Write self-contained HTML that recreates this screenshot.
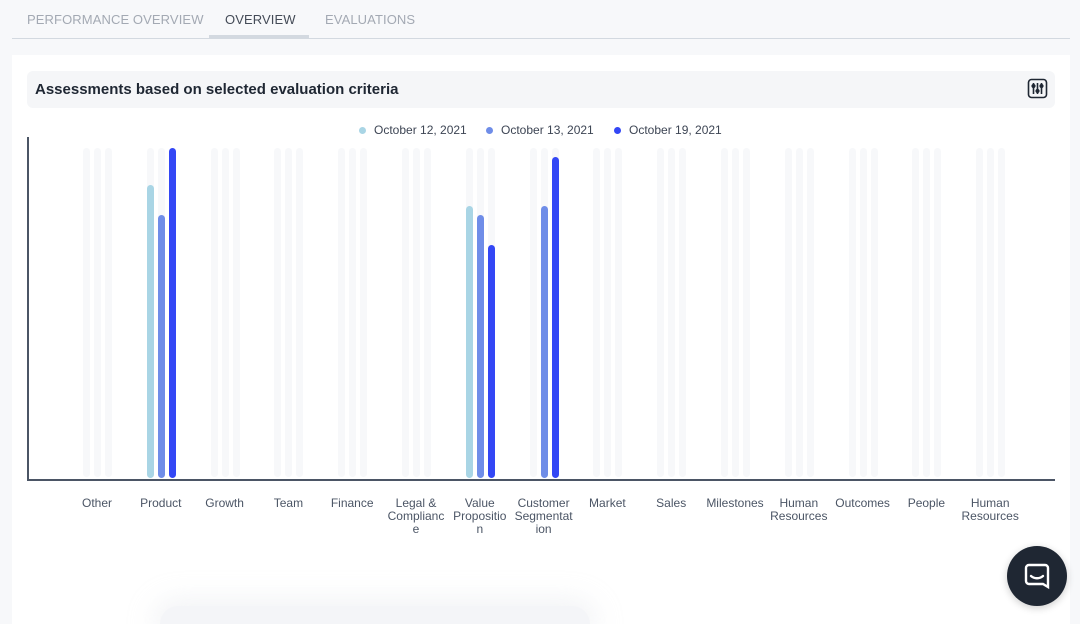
<!DOCTYPE html>
<html><head><meta charset="utf-8"><style>
*{margin:0;padding:0;box-sizing:border-box}
html,body{width:1080px;height:624px;overflow:hidden}
body{background:#f7f8fa;font-family:"Liberation Sans",sans-serif;position:relative}
.tabs{position:absolute;left:12px;top:0;width:1058px;height:39px;border-bottom:1px solid #d3d9e0}
.tab{position:absolute;top:12px;font-size:13px;color:#a3a9b3;letter-spacing:0.1px}
.card{position:absolute;left:12px;top:55px;width:1058px;height:569px;background:#fff}
.hdr{position:absolute;left:27px;top:71px;width:1028px;height:37px;background:#f5f6f8;border-radius:6px}
.hdr span{position:absolute;left:8px;top:10px;font-size:15px;font-weight:bold;color:#1f2733}
.lg{position:absolute;top:123px;font-size:12px;color:#3d4554}
.dot{position:absolute;top:127px;width:7px;height:7px;border-radius:50%}
.bar{position:absolute;width:7px;border-radius:4px}
.lbl{position:absolute;top:497px;width:70px;text-align:center;font-size:12px;line-height:13px;color:#4b5565;white-space:nowrap}
.clip{position:absolute;left:0;top:0;width:1080px;height:624px;overflow:hidden}
</style></head><body>
<div class="clip">
<div class="tabs"></div>
<div class="tab" style="left:27px">PERFORMANCE OVERVIEW</div>
<div class="tab" style="left:225px;color:#444b57">OVERVIEW</div>
<div style="position:absolute;left:209px;top:35px;width:100px;height:4px;background:#d3d9e0"></div>
<div class="tab" style="left:325px">EVALUATIONS</div>
<div class="card"></div>
<div class="hdr"><span>Assessments based on selected evaluation criteria</span>
<svg style="position:absolute;left:1000px;top:7px" width="21" height="21" viewBox="0 0 21 21" fill="none" stroke="#1f2733" stroke-width="1.6"><rect x="1.5" y="1.5" width="18" height="18" rx="3"/><path d="M6.5 5v11M10.5 5v11M14.5 5v11" /><circle cx="6.5" cy="8" r="1.3" fill="#1f2733"/><circle cx="10.5" cy="13" r="1.3" fill="#1f2733"/><circle cx="14.5" cy="8" r="1.3" fill="#1f2733"/></svg></div>
<div class="dot" style="left:359px;background:#a9d5e5"></div><div class="lg" style="left:374px">October 12, 2021</div>
<div class="dot" style="left:486px;background:#6f8de8"></div><div class="lg" style="left:501px">October 13, 2021</div>
<div class="dot" style="left:614px;background:#3347f5"></div><div class="lg" style="left:629px">October 19, 2021</div>
<div style="position:absolute;left:27px;top:137px;width:2px;height:344px;background:#4b5565"></div>
<div style="position:absolute;left:27px;top:479px;width:1028px;height:2px;background:#4b5565"></div>
<div id="bars"></div>
<div style="position:absolute;left:160px;top:606px;width:430px;height:18px;border-radius:30px 30px 0 0;box-shadow:0 0 25px 8px rgba(220,223,230,0.35);background:#f4f5f8"></div>
<div style="position:absolute;left:1007px;top:546px;width:60px;height:60px;border-radius:50%;background:#1f2733;box-shadow:0 2px 8px rgba(0,0,0,.2)">
<svg style="position:absolute;left:17px;top:16px" width="26" height="28" viewBox="0 0 26 28" fill="none" stroke="#fff" stroke-width="2.4"><path d="M5 3h16a3 3 0 0 1 3 3v19l-5-3H5a3 3 0 0 1-3-3V6a3 3 0 0 1 3-3z"/><path d="M7 14c3.5 3 8.5 3 12 0" stroke-linecap="round"/></svg></div>
</div>
<script>
var names=["Other","Product","Growth","Team","Finance","Legal &amp;<br>Complianc<br>e","Value<br>Propositio<br>n","Customer<br>Segmentat<br>ion","Market","Sales","Milestones","Human<br>Resources","Outcomes","People","Human<br>Resources"];
var data={1:[185,215,148],6:[206,215,245],7:[null,206,157]};
var cols=["#a9d5e5","#6f8de8","#3347f5"];
var h="";
for(var i=0;i<15;i++){var c=97+i*63.8;
for(var j=0;j<3;j++){var x=c-14+j*11;h+='<div class="bar" style="left:'+x+'px;top:148px;height:329px;background:#f7f8fa"></div>';
if(data[i]&&data[i][j]!=null)h+='<div class="bar" style="left:'+x+'px;top:'+data[i][j]+'px;height:'+(478-data[i][j])+'px;background:'+cols[j]+'"></div>';}
h+='<div class="lbl" style="left:'+(c-35)+'px">'+names[i]+'</div>';}
document.getElementById("bars").innerHTML=h;
</script>
</body></html>
